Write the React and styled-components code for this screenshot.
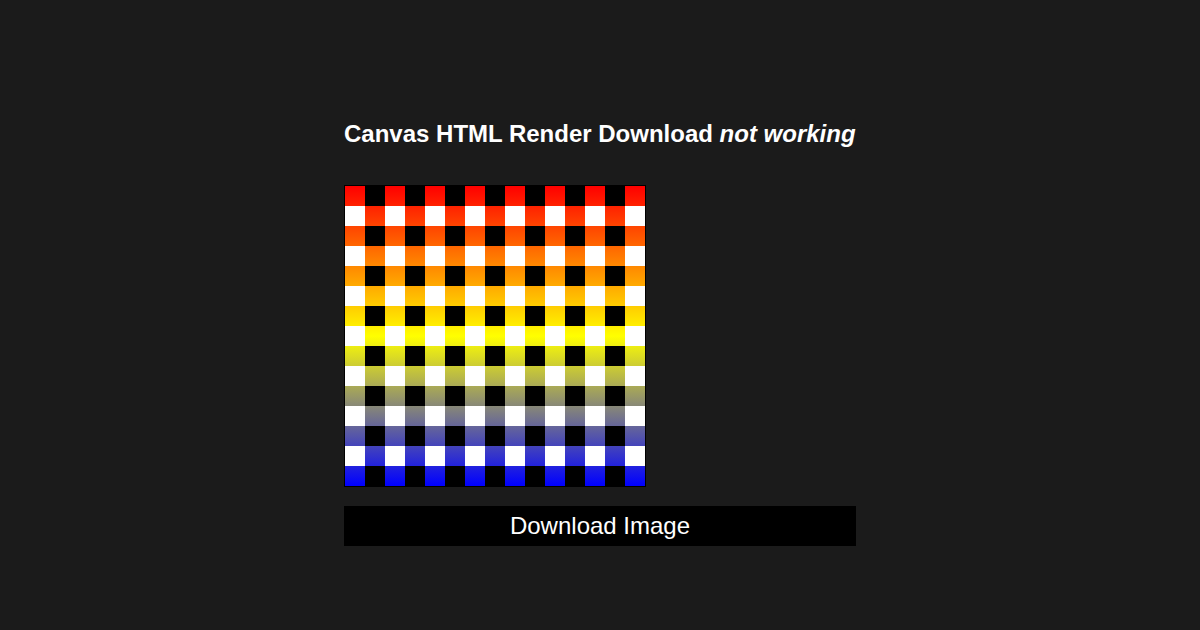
import styled, { createGlobalStyle } from "styled-components";

const CELL = 20;
const COUNT = 15;
const SIZE = CELL * COUNT;

const GlobalStyle = createGlobalStyle`
  html, body {
    margin: 0;
    padding: 0;
    background: #1b1b1b;
  }
  body {
    font-family: "Liberation Sans", Arial, Helvetica, sans-serif;
    color: #fff;
  }
`;

const Page = styled.main`
  display: flex;
  justify-content: center;
  min-height: 630px;
  padding-top: 120px;
  box-sizing: border-box;
`;

const Wrapper = styled.section`
  width: 512px;
  display: flex;
  flex-direction: column;
  align-items: flex-start;
`;

const Title = styled.h2`
  margin: 0 0 38px;
  font-size: 24px;
  font-weight: 700;
  line-height: 27px;
  color: #fff;

  em {
    font-style: italic;
  }
`;

const Board = styled.svg`
  display: block;
  border: 1px solid #000;
`;

const DownloadButton = styled.button`
  margin-top: 19px;
  width: 100%;
  height: 40px;
  padding: 0;
  border: none;
  background: #000;
  color: #fff;
  font-family: "Liberation Sans", Arial, Helvetica, sans-serif;
  font-size: 24px;
  cursor: pointer;
`;

const cells = [];
for (let row = 0; row < COUNT; row++) {
  for (let col = 0; col < COUNT; col++) {
    // even rows: colour on even cols, black between; odd rows: white between colour
    const coloured = (row + col) % 2 === 0;
    let fill = coloured ? "url(#stripe)" : row % 2 === 0 ? "#000" : "#fff";
    cells.push({ key: `${row}-${col}`, x: col * CELL, y: row * CELL, fill });
  }
}

const Checkerboard = () => (
  <Board width={SIZE} height={SIZE} viewBox={`0 0 ${SIZE} ${SIZE}`}>
    <defs>
      <linearGradient id="stripe" gradientUnits="userSpaceOnUse" x1="0" y1="0" x2="0" y2={SIZE}>
        <stop offset="0" stopColor="#ff0000" />
        <stop offset="0.5" stopColor="#ffff00" />
        <stop offset="1" stopColor="#0000ff" />
      </linearGradient>
    </defs>
    {cells.map((c) => (
      <rect key={c.key} x={c.x} y={c.y} width={CELL} height={CELL} fill={c.fill} shapeRendering="crispEdges" />
    ))}
  </Board>
);

export default function App() {
  return (
    <>
      <GlobalStyle />
      <Page>
        <Wrapper>
          <Title>
            Canvas HTML Render Download <em>not working</em>
          </Title>
          <Checkerboard />
          <DownloadButton type="button">Download Image</DownloadButton>
        </Wrapper>
      </Page>
    </>
  );
}
